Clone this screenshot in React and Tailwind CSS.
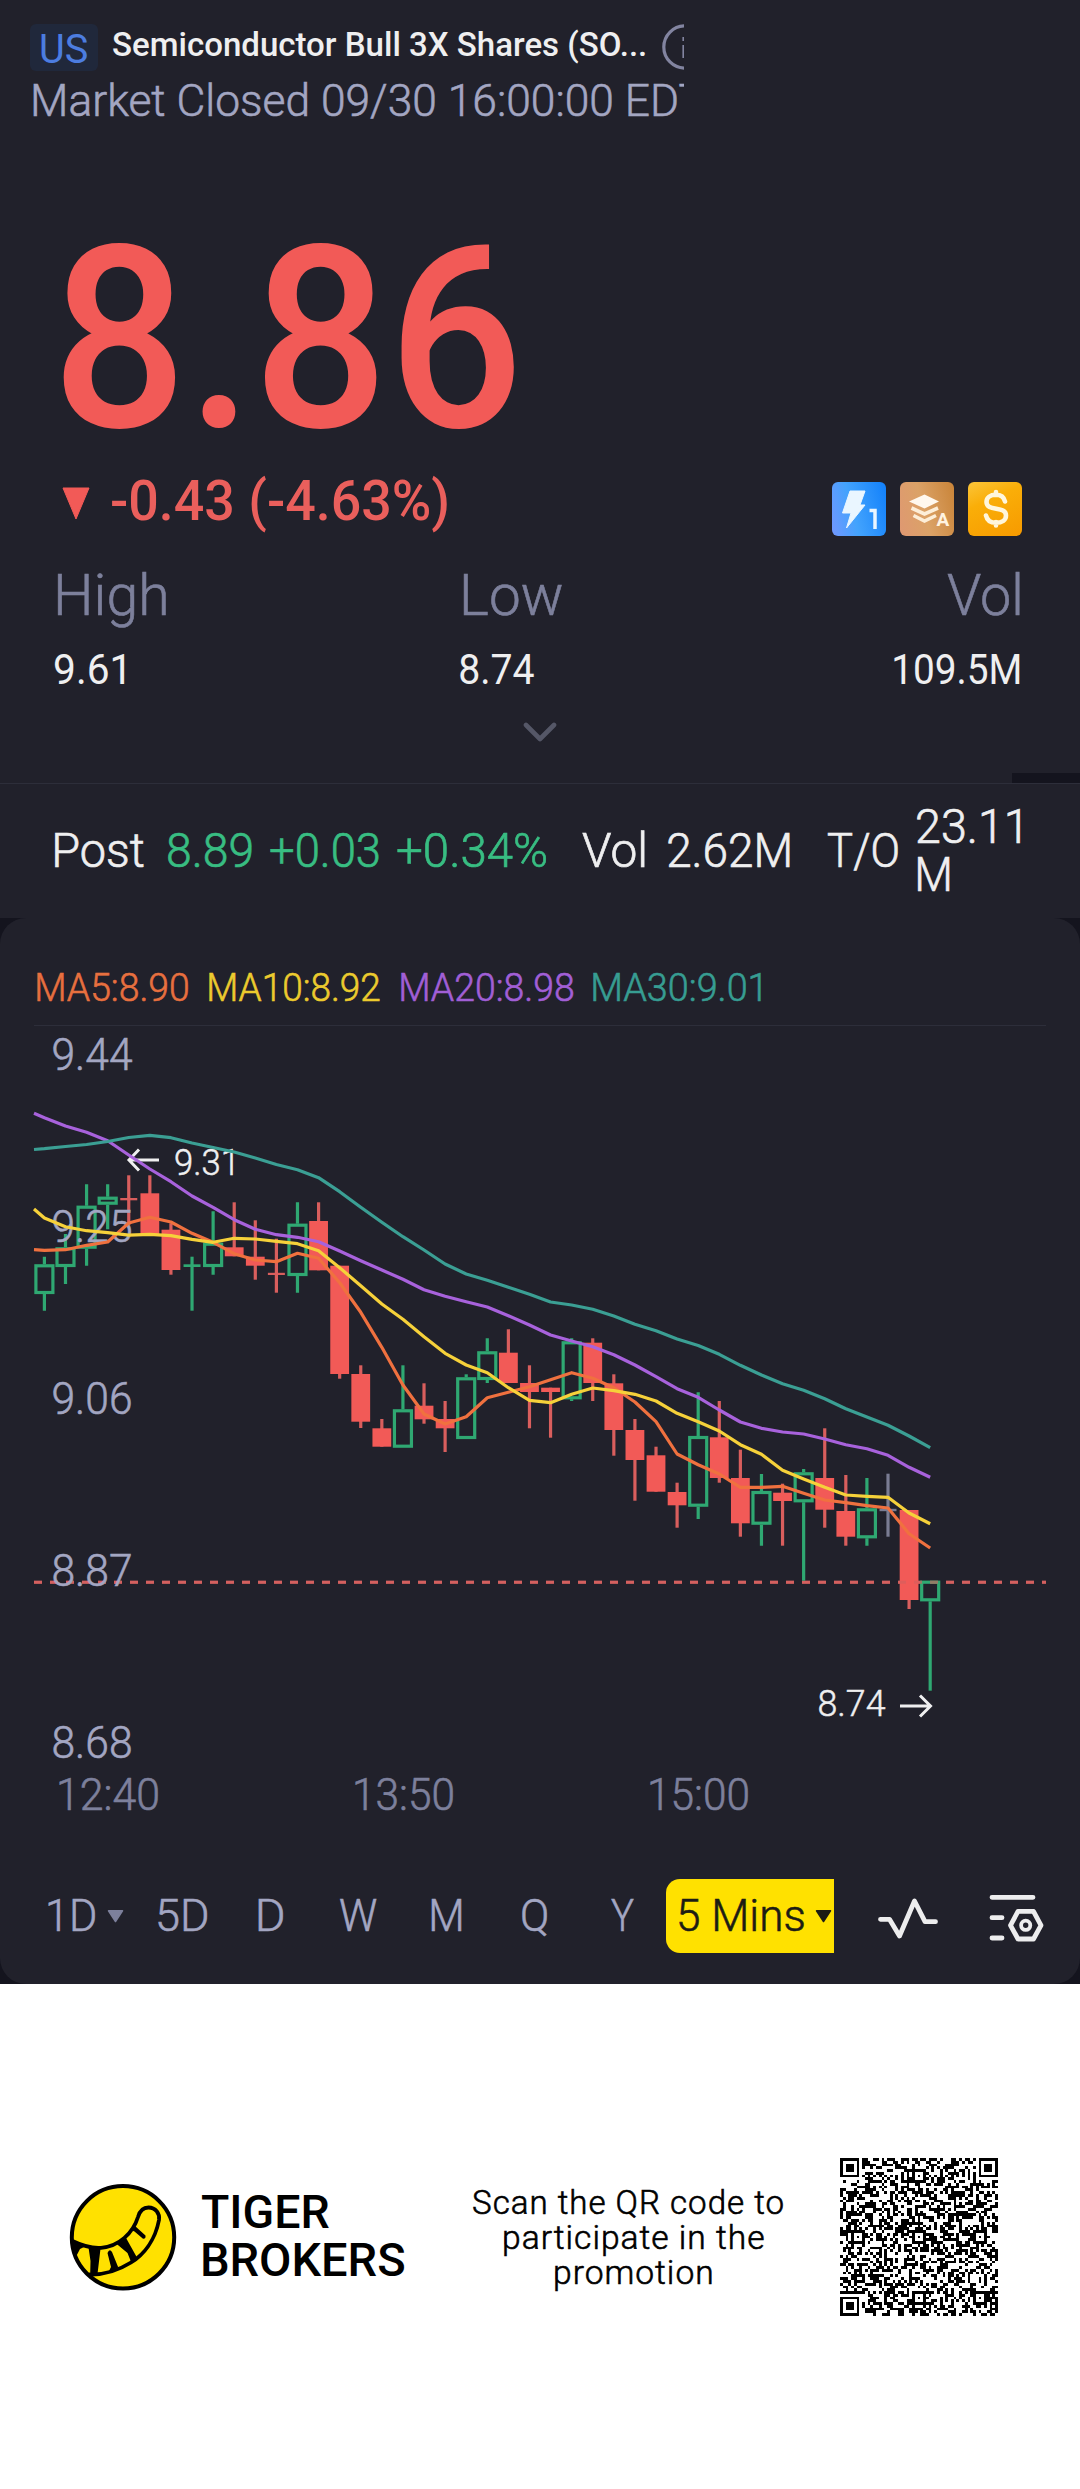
import React, { useLayoutEffect, useRef } from "react";

/* Stretches a single line of text so that its ink fills the box width. */
function Fit({ className, children }) {
  const box = useRef(null);
  const inner = useRef(null);
  useLayoutEffect(() => {
    const style = getComputedStyle(inner.current);
    const ctx = document.createElement("canvas").getContext("2d");
    ctx.font = `${style.fontWeight} ${style.fontSize} ${style.fontFamily}`;
    if (style.letterSpacing !== "normal") ctx.letterSpacing = style.letterSpacing;
    const m = ctx.measureText(inner.current.textContent);
    const scale = box.current.clientWidth / (m.actualBoundingBoxLeft + m.actualBoundingBoxRight);
    inner.current.style.transform = `translateX(${m.actualBoundingBoxLeft * scale}px) scaleX(${scale})`;
  });
  return (
    <div ref={box} className={`shrink-0 ${className}`}>
      <span ref={inner} className="inline-block origin-left whitespace-nowrap align-top">
        {children}
      </span>
    </div>
  );
}

const X0 = 44.4;
const STEP = 21.09;

// kind, high, body top, body bottom, low
const candles = [
  ["g", 1256.7, 1264.3, 1294, 1310.7],
  ["g", 1234, 1247.3, 1267, 1284],
  ["g", 1184.3, 1205.7, 1248.7, 1265.7],
  ["g", 1184.3, 1196.7, 1204.7, 1229.3],
  ["r", 1175.3, 1198, 1200.3, 1225],
  ["r", 1175.3, 1193.3, 1234, 1234],
  ["r", 1223.3, 1229.7, 1270, 1274.7],
  ["g", 1256.7, 1264.3, 1267, 1310.7],
  ["g", 1211.3, 1242.7, 1267, 1274.7],
  ["r", 1202.3, 1247.3, 1256.3, 1256.3],
  ["r", 1220.3, 1256.7, 1265.7, 1279.7],
  ["r", 1238.7, 1272.8, 1275, 1292.7],
  ["g", 1202.3, 1223.7, 1276, 1292.7],
  ["r", 1202.3, 1221, 1270.3, 1270.3],
  ["r", 1265.7, 1265.7, 1374, 1378.7],
  ["r", 1365.3, 1374, 1421.7, 1428],
  ["r", 1419, 1428.3, 1446.7, 1446.7],
  ["g", 1365.3, 1409.3, 1447.7, 1447.7],
  ["r", 1383.3, 1405.7, 1419.3, 1423.7],
  ["r", 1401, 1419, 1428.3, 1452],
  ["g", 1374.3, 1377.3, 1439, 1439],
  ["g", 1338.3, 1351.3, 1380, 1383],
  ["r", 1329.3, 1352.7, 1383, 1383],
  ["r", 1365.3, 1383, 1392, 1428.3],
  ["r", 1387.7, 1387.7, 1392, 1437.7],
  ["g", 1338.3, 1341.3, 1399.3, 1401],
  ["r", 1338.3, 1342.7, 1383, 1401],
  ["r", 1374.3, 1383.3, 1430, 1455.7],
  ["r", 1419, 1430, 1460, 1500.7],
  ["r", 1446.7, 1455.3, 1491.7, 1491.7],
  ["r", 1482.7, 1492, 1505.3, 1527.7],
  ["g", 1392.3, 1436, 1506.7, 1519],
  ["r", 1401, 1437.3, 1478, 1482.7],
  ["r", 1449.7, 1478, 1523.3, 1536.7],
  ["g", 1474, 1491, 1524.7, 1545.7],
  ["r", 1483.7, 1492.7, 1501, 1545.7],
  ["g", 1469, 1472.3, 1502.3, 1580.7],
  ["r", 1428.3, 1478, 1509.7, 1527.7],
  ["r", 1475, 1511, 1536.7, 1545.7],
  ["g", 1478, 1508.3, 1538.3, 1545.7],
  ["n", 1473.7, 1508.8, 1511.2, 1536.7],
  ["r", 1510, 1510, 1600, 1609],
  ["g", 1580.7, 1580.7, 1601.3, 1690.7],
];

// The first value of each series sits on the left edge of the plot.
const averages = [
  ["#f0713f", [1249.7, 1250.3, 1249.7, 1245.3, 1242, 1223, 1217.3, 1222, 1233.3, 1242.3, 1253.7, 1260, 1261.7, 1253.3, 1258.3, 1282.7, 1312.3, 1347.3, 1385, 1414, 1424, 1416.7, 1397.7, 1392.3, 1386.7, 1379.7, 1372.7, 1378.3, 1387.7, 1402, 1421.7, 1454, 1464.7, 1474, 1487.3, 1487.3, 1486.3, 1493.3, 1500, 1502.7, 1505.7, 1508, 1533.7, 1548]],
  ["#f6d13a", [1209, 1218, 1226.7, 1230.7, 1232.7, 1235.2, 1234.3, 1235.7, 1239.3, 1242.3, 1238.3, 1239, 1241.3, 1243.7, 1250.7, 1267.7, 1285.7, 1304, 1319.3, 1336.7, 1353.3, 1365, 1372.7, 1387.7, 1400.3, 1402.7, 1394.3, 1388, 1390.7, 1394.3, 1401, 1413.3, 1421.7, 1431, 1444.7, 1454.3, 1470.3, 1479, 1487.3, 1495, 1496.3, 1497.3, 1513, 1523.7]],
  ["#a862dc", [1113.3, 1117.7, 1126, 1132.3, 1140.7, 1155, 1169, 1181.7, 1196, 1207.3, 1219.7, 1229.3, 1234.7, 1237.3, 1241.7, 1251, 1260.7, 1270, 1279.3, 1289.7, 1296.3, 1301.7, 1307, 1315.7, 1325, 1335, 1341, 1346.7, 1354.7, 1365, 1376.7, 1388.7, 1397.3, 1410, 1422, 1428.3, 1432, 1434, 1439, 1444.7, 1448.7, 1455.3, 1467.3, 1477.3]],
  ["#3b9f94", [1149.5, 1148.7, 1146.5, 1144.5, 1141.5, 1137.5, 1135.3, 1137.7, 1143, 1147.5, 1152, 1158, 1164.5, 1169.7, 1177.7, 1191.7, 1207.3, 1222.3, 1236.7, 1250, 1264, 1274, 1280.3, 1287.3, 1294.3, 1302, 1305, 1309.3, 1316, 1324.3, 1330.7, 1339, 1345.5, 1354.3, 1365.3, 1375, 1383.7, 1390.3, 1398.7, 1408.7, 1417, 1425.3, 1436, 1447.7]],
];

const axis = [
  ["9.44", 1054.5],
  ["9.25", 1226.5],
  ["9.06", 1398.5],
  ["8.87", 1570.5],
  ["8.68", 1742.5],
];

const bodyColor = { g: "#2fa872", r: "#f25a57", n: "#7a7c93" };
const wickColor = { g: "#2fa872", r: "#d95e5d", n: "#7a7c93" };

function Candle({ i, data }) {
  const [kind, hi, top, bottom, lo] = data;
  const x = X0 + STEP * i;
  const thin = bottom - top < 3;
  return (
    <g>
      {kind === "g" && !thin ? (
        <>
          <path d={`M${x} ${hi}V${top}M${x} ${bottom}V${lo}`} stroke={wickColor.g} strokeWidth="3.2" />
          <rect x={x - 8.5} y={top + 1.5} width="17" height={bottom - top - 3} fill="none" stroke={bodyColor.g} strokeWidth="3.2" />
        </>
      ) : (
        <>
          <path d={`M${x} ${hi}V${lo}`} stroke={wickColor[kind]} strokeWidth="3.2" />
          <rect x={x - (thin ? 8.5 : 9.4)} y={top} width={thin ? 17 : 18.8} height={bottom - top} fill={thin ? wickColor[kind] : bodyColor[kind]} />
        </>
      )}
    </g>
  );
}

function Chart() {
  return (
    <svg className="block h-[738px] w-[1080px] shrink-0" viewBox="0 1026 1080 738" fontFamily="Roboto, sans-serif" fontWeight="300">
      <path d="M34 1582.3H1046" stroke="#d4605f" strokeWidth="3" strokeDasharray="8 8" />
      {candles.map((c, i) => (
        <Candle key={i} i={i} data={c} />
      ))}
      <path d="M34 1582.3H1046" stroke="#d4605f" strokeWidth="3" strokeDasharray="8 8" opacity="0.6" />
      {axis.map(([label, y]) => (
        <text key={label} x="51.5" y={y + 15.7} fontSize="44" fill="#a3a6c2" stroke="#a3a6c2" strokeWidth="0.6" textLength="81" lengthAdjust="spacingAndGlyphs">
          {label}
        </text>
      ))}
      <g stroke="#efeff0" strokeWidth="3" fill="none">
        <path d="M159 1160H130M139 1149.5L129 1160L139 1170.5" />
        <path d="M900 1706H930M920 1695.5L930.5 1706L920 1716.5" />
      </g>
      <g fill="#efeff0" stroke="#efeff0" strokeWidth="0.5" fontSize="37">
        <text x="174" y="1175" textLength="66" lengthAdjust="spacingAndGlyphs">9.31</text>
        <text x="817.5" y="1716" textLength="68" lengthAdjust="spacingAndGlyphs">8.74</text>
      </g>
      {averages.map(([color, ys]) => (
        <polyline
          key={color}
          fill="none"
          stroke={color}
          strokeWidth="3.2"
          strokeLinejoin="round"
          points={ys.map((y, i) => `${i === 0 ? 34 : X0 + STEP * (i - 1)},${y}`).join(" ")}
        />
      ))}
    </svg>
  );
}

function Badges() {
  return (
    <div className="flex gap-[14px]">
      <div className="h-[54px] w-[54px] overflow-hidden rounded-[6px] bg-[linear-gradient(75deg,#7297ff_0%,#43a3fd_40%,#1180fb_100%)]">
        <svg viewBox="0 0 54 54" className="h-full w-full">
          <path d="M18 9H33L28 23H33L14.500 46L19 31H10.500Z" fill="#eaf6ff" stroke="#eaf6ff" strokeLinejoin="round" />
          <path d="M37.500 28.500H43V47" fill="none" stroke="#eaf6ff" strokeWidth="3.500" />
        </svg>
      </div>
      <div className="h-[54px] w-[54px] overflow-hidden rounded-[6px] bg-[linear-gradient(75deg,#df9872_0%,#dba267_45%,#c98438_100%)]">
        <svg viewBox="0 0 54 54" className="h-full w-full">
          <path d="M9 19.500L24.500 12.500L39 19.500L24.500 26.500Z" fill="#fff8ee" />
          <path d="M11.500 26L24.500 32L38 26M13.500 33.500L24.500 39L36 33.500" fill="none" stroke="#fdeed8" strokeWidth="3.600" />
          <text x="36.500" y="43.500" fontSize="19" fontWeight="700" fontFamily="Roboto, sans-serif" fill="#fff3e0">A</text>
        </svg>
      </div>
      <div className="h-[54px] w-[54px] overflow-hidden rounded-[6px] bg-[linear-gradient(155deg,#fbc53a_0%,#faae08_35%,#f79a00_100%)]">
        <svg viewBox="0 0 54 54" className="h-full w-full">
          <path d="M37 19.500C36 15.500 33 12.800 28 12.800C22 12.800 18.500 15.500 18.500 20C18.500 30 38 23.500 38 33.500C38 38 34 40.800 28 40.800C22 40.800 19 38 18 33.500M28 10V13M28 40V43.500" fill="none" stroke="#fff6dc" strokeWidth="4.600" strokeLinecap="round" />
        </svg>
      </div>
    </div>
  );
}

function Caret({ className }) {
  return (
    <svg viewBox="0 0 17 13" className={`h-[13px] w-[17px] shrink-0 ${className}`}>
      <path d="M1.500 0.800H15.500L8.500 11.500Z" fill="currentColor" stroke="currentColor" strokeWidth="1.500" strokeLinejoin="round" />
    </svg>
  );
}

function QrCode() {
  const n = 57;
  const finders = [[0, 0], [n - 7, 0], [0, n - 7]];
  const aligns = [];
  [6, 28, 50].forEach((a) =>
    [6, 28, 50].forEach((b) => {
      if (!((a === 6 && b === 6) || (a === 6 && b === 50) || (a === 50 && b === 6))) aligns.push([a, b]);
    })
  );
  let seed = 20241;
  let d = "";
  for (let y = 0; y < n; y++) {
    for (let x = 0; x < n; x++) {
      seed = (seed * 1103515245 + 12345) % 2147483648;
      let on = seed / 2147483648 < 0.5;
      if (x === 6 || y === 6) on = (x + y) % 2 === 0;
      for (const [ax, ay] of aligns) {
        const r = Math.max(Math.abs(x - ax), Math.abs(y - ay));
        if (r <= 2) on = r !== 1;
      }
      for (const [fx, fy] of finders) {
        const r = Math.max(Math.abs(x - fx - 3), Math.abs(y - fy - 3));
        if (r <= 4) on = r === 3 || r < 2;
      }
      if (on) d += `M${x} ${y}h1v1h-1z`;
    }
  }
  return (
    <svg viewBox="0 0 57 57" className="h-[158px] w-[158px] shrink-0" shapeRendering="crispEdges">
      <path d={d} fill="#000" />
    </svg>
  );
}

function TigerLogo() {
  return (
    <svg viewBox="0 0 108 108" className="h-[108px] w-[108px] shrink-0">
      <circle cx="54" cy="54.300" r="51.200" fill="#ffe100" stroke="#000" strokeWidth="4" />
      <path d="M3.500 58C14 63 23 65.500 32 64.800C50 63.500 64 50 69 34C71 27 75 24.500 79.500 24.500C86.500 24.500 91 30.500 90 37C86 58 74 72 62 79.500C50 87 36 92 20 91.500" fill="none" stroke="#000" strokeWidth="3.800" />
      <path d="M2.700 57L17 63L11 66L5.800 76ZM19.300 63L31.700 64L28.500 91H21.200L21.500 78ZM38.500 70Q40.500 65 43 69L49.300 84.500L39.500 89L42 84ZM46.500 60L56.500 54L68.500 75.500L62.500 80L58.500 70ZM61 46.500L66 43L76.500 52.500Q77 56 74 55.700L65.500 48.500Z" fill="#000" />
    </svg>
  );
}

export default function App() {
  return (
    <div className="flex h-[2489px] w-[1080px] flex-col overflow-hidden bg-white font-[Roboto,sans-serif] text-[#efeff0]">
      <section className="flex h-[918px] shrink-0 flex-col bg-[#21212b]">
        <header className="h-[125px] w-[684px] shrink-0 overflow-hidden pl-[30px] pt-[24px]">
          <div className="flex h-[47px]">
            <div className="flex h-[47px] w-[68px] shrink-0 items-center justify-center rounded-[6px] bg-[#20283b]">
              <Fit className="mt-[2px] w-[46px] text-[41px] leading-[46px] text-[#4c7de0]">US</Fit>
            </div>
            <Fit className="ml-[15px] w-[532px] text-[33.500px] font-medium leading-[41px]">Semiconductor Bull 3X Shares (SO...</Fit>
            <svg viewBox="0 0 46 46" className="ml-[17px] h-[46px] w-[46px] shrink-0">
              <circle cx="23" cy="23" r="21.200" fill="none" stroke="#8284a0" strokeWidth="3.200" />
              <path d="M22 13V17M22 21V34" fill="none" stroke="#8284a0" strokeWidth="3.200" />
            </svg>
          </div>
          <Fit className="ml-[4px] mt-[4px] w-[670px] text-[45px] font-light leading-[52px] text-[#a3a6c2] [-webkit-text-stroke:0.6px]">Market Closed 09/30 16:00:00 EDT</Fit>
        </header>

        <Fit className="ml-[63px] mt-[110px] w-[451px] text-[255px] font-medium leading-[210px] text-[#f25a57]">8.86</Fit>

        <div className="mt-[37px] flex h-[54px] items-center justify-between pl-[62px] pr-[58px]">
          <div className="-mt-[17px] flex items-center">
            <svg viewBox="0 0 28 33" className="mt-[5px] h-[33px] w-[28px]">
              <path d="M1 1H27L14 32Z" fill="#f25a57" stroke="#f25a57" strokeLinejoin="round" />
            </svg>
            <Fit className="ml-[22px] w-[335px] text-[55px] font-medium leading-[60px] text-[#ea5f5c]">-0.43 (-4.63%)</Fit>
          </div>
          <Badges />
        </div>

        <div className="mt-[29px] flex justify-between pl-[55px] pr-[60px]">
          <div className="flex flex-col">
            <Fit className="ml-[3px] w-[108px] text-[57.500px] font-light leading-[62px] text-[#7d809c] [-webkit-text-stroke:0.6px]">High</Fit>
            <Fit className="mt-[18px] w-[69px] text-[42px] leading-[50px]">9.61</Fit>
          </div>
          <div className="flex flex-col pr-[39px]">
            <Fit className="ml-[4px] w-[98px] text-[57.500px] font-light leading-[62px] text-[#7d809c] [-webkit-text-stroke:0.6px]">Low</Fit>
            <Fit className="mt-[18px] w-[74px] text-[42px] leading-[50px]">8.74</Fit>
          </div>
          <div className="flex flex-col items-end">
            <Fit className="w-[73px] text-[57.500px] font-light leading-[62px] text-[#7d809c] [-webkit-text-stroke:0.6px]">Vol</Fit>
            <Fit className="mt-[18px] w-[126px] text-[42px] leading-[50px]">109.5M</Fit>
          </div>
        </div>

        <svg viewBox="0 0 34 20" className="ml-[523px] mt-[27px] h-[20px] w-[34px] shrink-0">
          <path d="M3 3L17 17L31 3" fill="none" stroke="#555767" strokeWidth="4.600" strokeLinecap="round" strokeLinejoin="round" />
        </svg>

        <div className="mt-auto ml-auto h-[10px] w-[68px] shrink-0 bg-[#14141e]" />
        <div className="flex h-[135px] shrink-0 items-center border-t border-[#2d2e3a] pl-[55px] text-[49px] font-light leading-[56px] [-webkit-text-stroke:0.7px]">
          <Fit className="w-[89px]">Post</Fit>
          <Fit className="ml-[24px] w-[84px] text-[#38bd82]">8.89</Fit>
          <Fit className="ml-[18px] w-[109px] text-[#38bd82]">+0.03</Fit>
          <Fit className="ml-[18px] w-[149px] text-[#38bd82]">+0.34%</Fit>
          <Fit className="ml-[36px] w-[62px]">Vol</Fit>
          <Fit className="ml-[24px] w-[121px]">2.62M</Fit>
          <Fit className="ml-[39px] w-[70px]">T/O</Fit>
          <div className="ml-[19px] leading-[48px]">
            <Fit className="w-[103px]">23.11</Fit>
            <Fit className="ml-[1px] w-[31px]">M</Fit>
          </div>
        </div>
      </section>

      <div className="h-[1066px] shrink-0 bg-[#14141e]">
        <section className="flex h-full flex-col rounded-[26px] bg-[#21212b]">
          <div className="mx-[34px] flex h-[108px] shrink-0 items-end border-b border-[#2d2e3a] pb-[12px] pl-[3px] text-[39.500px] font-light leading-[50px] [-webkit-text-stroke:0.6px]">
            <Fit className="w-[151px] text-[#e8703f]">MA5:8.90</Fit>
            <Fit className="ml-[21px] w-[171px] text-[#eccb2e]">MA10:8.92</Fit>
            <Fit className="ml-[21px] w-[172px] text-[#a15fd6]">MA20:8.98</Fit>
            <Fit className="ml-[20px] w-[168px] text-[#379d92]">MA30:9.01</Fit>
          </div>
          <Chart />
          <div className="flex h-[62px] shrink-0 items-center pl-[59px] pt-[1px] text-[#7d809c] [-webkit-text-stroke:0.6px]">
            <Fit className="w-[99px] text-[43.500px] font-light leading-[50px]">12:40</Fit>
            <Fit className="ml-[197px] w-[98px] text-[43.500px] font-light leading-[50px]">13:50</Fit>
            <Fit className="ml-[197px] w-[98px] text-[43.500px] font-light leading-[50px]">15:00</Fit>
          </div>
          <div className="mt-[53px] flex h-[74px] shrink-0 items-center pl-[48px] text-[45px] font-light leading-[52px] text-[#a3a6c2] [-webkit-text-stroke:0.6px]">
            <Fit className="w-[47px]">1D</Fit>
            <Caret className="ml-[12px] text-[#7d809c]" />
            <Fit className="ml-[34px] w-[49px]">5D</Fit>
            <Fit className="ml-[52px] w-[24px]">D</Fit>
            <Fit className="ml-[57px] w-[37px]">W</Fit>
            <Fit className="ml-[55px] w-[29px]">M</Fit>
            <Fit className="ml-[61px] w-[25px]">Q</Fit>
            <Fit className="ml-[64px] w-[23px]">Y</Fit>
            <div className="ml-[32px] flex h-[74px] w-[168px] shrink-0 items-center rounded-l-[14px] bg-[#ffe100] pl-[13px] text-[#1c1c14]">
              <Fit className="w-[125px]">5 Mins</Fit>
              <Caret className="ml-[11px]" />
            </div>
            <svg viewBox="878 1896 62 46" className="ml-[44px] mt-[6px] h-[46px] w-[62px] shrink-0">
              <path d="M880.500 1919.300H889.500L899.500 1936L914.500 1901L925 1921.700H935.500" fill="none" stroke="#ededee" strokeWidth="4.800" strokeLinecap="round" strokeLinejoin="round" />
            </svg>
            <svg viewBox="986 1892 60 54" className="ml-[46px] mt-[6px] h-[54px] w-[60px] shrink-0">
              <g fill="none" stroke="#ededee" strokeWidth="4.800" strokeLinecap="round" strokeLinejoin="round">
                <path d="M992 1897.300H1033M992 1917.700H1002M992 1938H1002" />
                <path d="M1018 1911.300H1033.500L1041 1925.300L1033.500 1939H1018L1010.500 1925.300Z" />
                <circle cx="1025.700" cy="1925.300" r="4.600" strokeWidth="3.800" />
              </g>
            </svg>
          </div>
        </section>
      </div>

      <footer className="flex h-[505px] shrink-0 items-center pt-[1px] pl-[69px] text-black">
        <TigerLogo />
        <div className="ml-[25px]">
          <Fit className="w-[127px] text-[45.500px] font-medium leading-[48px]">TIGER</Fit>
          <Fit className="ml-[1px] w-[201px] text-[45.500px] font-medium leading-[48px]">BROKERS</Fit>
        </div>
        <div className="ml-[69px] flex w-[310px] flex-col items-center text-[34px] font-light leading-[35px] tracking-[1px] [-webkit-text-stroke:0.6px]">
          <Fit className="w-[310px]">Scan the QR code to</Fit>
          <Fit className="ml-[12px] w-[260px]">participate in the</Fit>
          <Fit className="ml-[10px] w-[157px]">promotion</Fit>
        </div>
        <div className="ml-[57px]">
          <QrCode />
        </div>
      </footer>
    </div>
  );
}
